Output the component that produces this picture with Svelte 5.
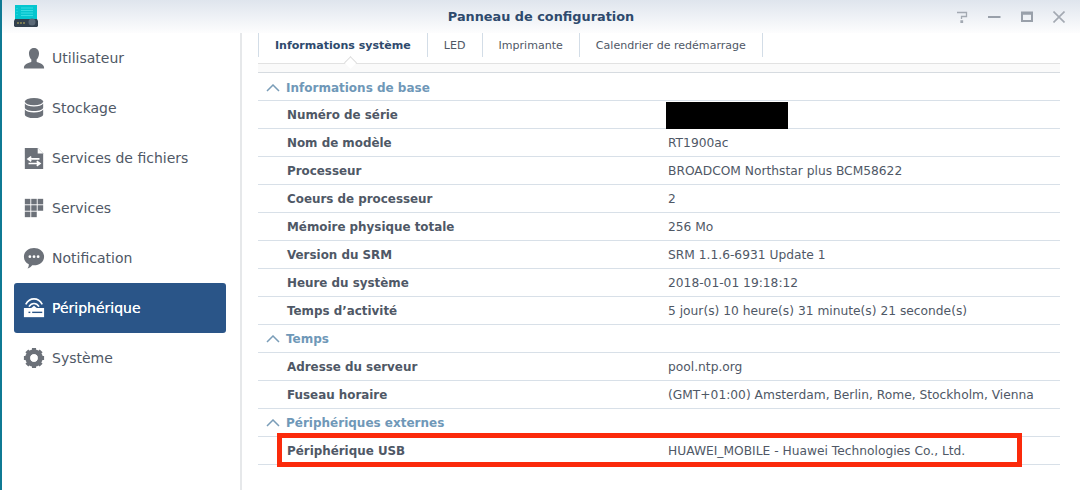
<script>
  const navItems = [
    { id: "user", label: "Utilisateur" },
    { id: "storage", label: "Stockage" },
    { id: "files", label: "Services de fichiers" },
    { id: "services", label: "Services" },
    { id: "notif", label: "Notification" },
    { id: "device", label: "Périphérique", active: true },
    { id: "system", label: "Système" }
  ];
  const tabs = ["Informations système", "LED", "Imprimante", "Calendrier de redémarrage"];
  const sections = [
    {
      title: "Informations de base",
      rows: [
        { key: "Numéro de série", hidden: true },
        { key: "Nom de modèle", value: "RT1900ac" },
        { key: "Processeur", value: "BROADCOM Northstar plus BCM58622" },
        { key: "Coeurs de processeur", value: "2" },
        { key: "Mémoire physique totale", value: "256 Mo" },
        { key: "Version du SRM", value: "SRM 1.1.6-6931 Update 1" },
        { key: "Heure du système", value: "2018-01-01 19:18:12" },
        { key: "Temps d’activité", value: "5 jour(s) 10 heure(s) 31 minute(s) 21 seconde(s)" }
      ]
    },
    {
      title: "Temps",
      rows: [
        { key: "Adresse du serveur", value: "pool.ntp.org" },
        { key: "Fuseau horaire", value: "(GMT+01:00) Amsterdam, Berlin, Rome, Stockholm, Vienna" }
      ]
    },
    {
      title: "Périphériques externes",
      rows: [
        { key: "Périphérique USB", value: "HUAWEI_MOBILE - Huawei Technologies Co., Ltd.", marked: true }
      ]
    }
  ];
</script>

<div class="window">
  <header class="titlebar">
    <svg class="app-icon" width="24" height="22" viewBox="0 0 24 22">
      <rect x="1" y="0" width="22" height="16" fill="#05c6cf" />
      <path d="M7 3h12M7 5.500h12M7 8h12M7 10.500h12" stroke="#38dde3" stroke-width="1" />
      <path d="M3 3v8" stroke="#38dde3" stroke-width="1" stroke-dasharray="1 2" />
      <path d="M1 14h22l1 2v5l-1 1H1l-1-1v-5z" fill="#33414f" />
      <path d="M3 18h2M6 18h2M9 18h2" stroke="#c5b65a" stroke-width="1" />
      <circle cx="18" cy="17" r="3.500" fill="#5b6977" />
    </svg>
    <h1>Panneau de configuration</h1>
    <div class="win-controls">
      <svg width="12" height="12" viewBox="0 0 12 12"><path d="M1 1.500h9.500v4H5.500v2.500M5 10h1.500v1.500H5z" fill="none" stroke="#a3a9b2" stroke-width="1.300" /></svg>
      <svg width="13" height="12" viewBox="0 0 13 12"><path d="M0 6h12.500" stroke="#99a0aa" stroke-width="2" /></svg>
      <svg width="12" height="12" viewBox="0 0 12 12"><rect x="1" y="1.500" width="10" height="8.500" fill="none" stroke="#99a0aa" stroke-width="2" /><path d="M0 2.500h12" stroke="#99a0aa" stroke-width="2.500" /></svg>
      <svg width="12" height="12" viewBox="0 0 12 12"><path d="M.5.500l11 11M11.500.500l-11 11" stroke="#a3a9b2" stroke-width="1.600" /></svg>
    </div>
  </header>

  <div class="body">
    <nav class="sidebar">
      {#each navItems as item}
        <div class="nav-item" class:active={item.active}>
          <span class="nav-icon">
            {#if item.id === "user"}
              <svg width="24" height="24" viewBox="0 0 24 24"><path d="M12 1c3.800 0 5.500 2.800 5.500 6 0 2.800-1.200 5.200-2.600 6.500v2.500c1.500 1.200 8.100 2 8.100 6.500v1H1v-1c0-4.500 6.600-5.300 8.100-6.500v-2.500C7.700 12.200 6.500 9.800 6.500 7c0-3.200 1.700-6 5.500-6z" fill="#6c7179" /></svg>
            {:else if item.id === "storage"}
              <svg width="24" height="24" viewBox="0 0 24 24" fill="#6c7179"><ellipse cx="12" cy="5" rx="10" ry="4" /><path d="M2 7c1.200 2.200 5 3.300 10 3.300S20.800 9.200 22 7v4.500c0 2.200-4.500 3.800-10 3.800S2 13.700 2 11.500z" /><path d="M2 13.500c1.200 2.200 5 3.300 10 3.300s8.800-1.100 10-3.300V19c0 2.200-4.500 4-10 4S2 21.200 2 19z" /></svg>
            {:else if item.id === "files"}
              <svg width="24" height="24" viewBox="0 0 24 24"><path d="M2 1h14l6 6v17H2z" fill="#6c7179" /><path d="M16 1l6 6h-6z" fill="#fff" /><path d="M18 13H7M9 10.500l-3.500 2.500L9 15.500M6 18h11M15 15.500l3.500 2.500-3.500 2.500" fill="none" stroke="#fff" stroke-width="1.800" /></svg>
            {:else if item.id === "services"}
              <svg width="24" height="24" viewBox="0 0 24 24" fill="#6c7179"><rect x="2" y="2" width="6" height="6" /><rect x="9" y="2" width="6" height="6" /><rect x="16" y="2" width="6" height="6" /><rect x="2" y="9" width="6" height="6" /><rect x="9" y="9" width="6" height="6" /><rect x="16" y="9" width="6" height="6" /><rect x="2" y="16" width="6" height="6" /><rect x="9" y="16" width="6" height="6" /></svg>
            {:else if item.id === "notif"}
              <svg width="24" height="24" viewBox="0 0 24 24"><path d="M12 1c6 0 11 4 11 9.500S18 20 12 20h-2c-1 1.500-3 3-5 3.500 1-1.300 1.500-3 1.300-4.800C3 17.200 1 14.200 1 10.500 1 5 6 1 12 1z" fill="#6c7179" /><circle cx="7.500" cy="10.500" r="1.500" fill="#fff" /><circle cx="12" cy="10.500" r="1.500" fill="#fff" /><circle cx="16.500" cy="10.500" r="1.500" fill="#fff" /></svg>
            {:else if item.id === "device"}
              <svg width="24" height="24" viewBox="0 0 24 24"><path d="M3 8C7.500 0 16.500 0 21 8M6.500 10.500c3-4.500 8-4.500 11 0" fill="none" stroke="#fff" stroke-width="1.800" /><path d="M12 9.500l3 2.500H9z" fill="#fff" /><rect x="1" y="12" width="22" height="10" fill="#fff" /><rect x="6" y="16" width="2" height="1.500" fill="#2a5588" /><rect x="10" y="16" width="11" height="1.500" fill="#2a5588" /></svg>
            {:else}
              <svg width="24" height="24" viewBox="0 0 24 24"><circle cx="12" cy="12" r="6.800" fill="none" stroke="#6c7179" stroke-width="5.500" /><path d="M12 1v22M1 12h22M4.200 4.200l15.600 15.600M19.800 4.200L4.200 19.800" stroke="#6c7179" stroke-width="4.500" stroke-dasharray="4 14" /><circle cx="12" cy="12" r="4" fill="#fff" /></svg>
            {/if}
          </span>
          <span>{item.label}</span>
        </div>
      {/each}
    </nav>

    <main class="content">
      <div class="tabs">
        {#each tabs as tab, i}
          <div class="tab" class:current={i === 0}>{tab}</div>
        {/each}
      </div>
      <div class="tab-rule"><span class="notch"></span></div>

      {#each sections as section}
        <div class="section-head">
          <svg width="14" height="8" viewBox="0 0 14 8"><path d="M1 7l6-6 6 6" fill="none" stroke="#7a9db8" stroke-width="1.500" /></svg>
          <span>{section.title}</span>
        </div>
        {#each section.rows as row}
          <div class="row">
            <div class="key">{row.key}</div>
            <div class="value">
              {#if row.hidden}<span class="redacted"></span>{/if}
              {row.value ?? ""}
            </div>
            {#if row.marked}<span class="marker"></span>{/if}
          </div>
        {/each}
      {/each}
    </main>
  </div>
</div>

<style>
  :global(body) {
    background: #fff;
  }

  .window {
    width: 1080px;
    height: 490px;
    box-sizing: border-box;
    overflow: hidden;
    border-left: 2px solid #0f7a94;
    background: #fff;
    font-family: "DejaVu Sans", Verdana, sans-serif;
    display: flex;
    flex-direction: column;
  }

  .titlebar {
    height: 33px;
    flex: none;
    display: flex;
    align-items: center;
    position: relative;
    background: linear-gradient(#dfe5ed, #fdfdfe);
  }

  .app-icon {
    margin: -2px 0 0 12px;
  }

  .titlebar h1 {
    position: absolute;
    left: 0;
    right: 0;
    margin: 0;
    text-align: center;
    font-size: 12.85px;
    font-weight: bold;
    color: #2e4a6d;
  }

  .win-controls {
    margin-left: auto;
    margin-right: 15px;
    display: flex;
    gap: 20px;
    align-items: center;
  }

  .body {
    flex: 1;
    display: flex;
    min-height: 0;
  }

  .sidebar {
    width: 240px;
    flex: none;
    box-sizing: border-box;
    padding-left: 12px;
    border-right: 2px solid #e6e8ea;
  }

  .nav-item {
    width: 212px;
    height: 50px;
    display: flex;
    align-items: center;
    gap: 7px;
    padding-left: 9px;
    box-sizing: border-box;
    font-size: 14px;
    color: #4f5866;
    border-radius: 3px;
  }

  .nav-item.active {
    background: #2a5588;
    color: #fff;
    text-shadow: 0 0 0.6px #fff;
  }

  .nav-icon {
    width: 22px;
    height: 24px;
    display: flex;
    justify-content: center;
  }

  .content {
    flex: 1;
    margin: 0 20px 0 16px;
    font-size: 12px;
    color: #4f5866;
  }

  .tabs {
    height: 24px;
    display: flex;
    align-items: stretch;
    border-left: 1px solid #d3dde7;
  }

  .tab {
    padding: 0 16px;
    display: flex;
    align-items: center;
    font-size: 11.05px;
    border-right: 1px solid #d3dde7;
  }

  .tab.current {
    font-weight: bold;
    color: #2e4a6d;
  }

  .tab-rule {
    height: 16px;
    position: relative;
    margin-top: 6px;
    background: linear-gradient(#e2e2e2 0, #e2e2e2 1px, #fafafa 1px, #fafafa 9px, #d6dbe0 9px, #d6dbe0 10px, #fff 10px);
  }

  .notch {
    position: absolute;
    left: 88px;
    top: -5px;
    width: 8px;
    height: 8px;
    background: #fff;
    border-left: 1px solid #dcdcdc;
    border-top: 1px solid #dcdcdc;
    transform: rotate(45deg);
  }

  .section-head {
    height: 27px;
    display: flex;
    align-items: center;
    gap: 6px;
    padding-left: 8px;
    font-weight: bold;
    color: #6f98b8;
    border-bottom: 1px solid #d8e0e8;
  }

  .tab-rule + .section-head {
    height: 24px;
    padding-top: 3px;
    margin-top: -6px;
  }

  .row {
    height: 27px;
    display: flex;
    align-items: center;
    position: relative;
    border-bottom: 1px solid #d8e0e8;
  }

  .key {
    width: 410px;
    padding-left: 29px;
    box-sizing: border-box;
    font-weight: bold;
    font-size: 11.9px;
  }

  .value {
    font-size: 12.25px;
  }

  .redacted {
    position: absolute;
    left: 408px;
    top: 1px;
    width: 122px;
    height: 27px;
    background: #000;
  }

  .marker {
    position: absolute;
    left: 19px;
    top: -4px;
    width: 745px;
    height: 34px;
    box-sizing: border-box;
    border: 5px solid #fb2a0b;
  }
</style>
